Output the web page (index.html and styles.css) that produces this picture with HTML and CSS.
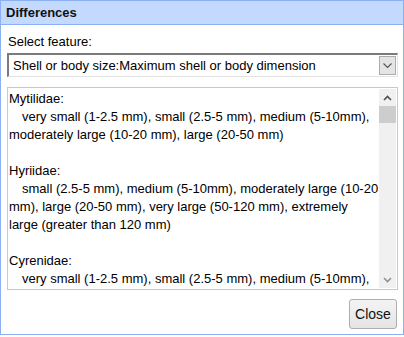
FILE: index.html
```html
<!DOCTYPE html>
<html lang="en">
<head>
    <meta charset="UTF-8">
    <title>Differences</title>
    <link rel="stylesheet" href="styles.css">
</head>
<body>
    <div class="dialog">
        <div class="dialog-title">Differences</div>
        <div class="dialog-body">
            <div class="field-label">Select feature:</div>
            <div class="select-box">
                <span class="select-text">Shell or body size:Maximum shell or body dimension</span>
                <span class="select-arrow">
                    <svg width="9" height="6" viewBox="0 0 9 6"><path d="M0.5 0.5 L4.5 4.5 L8.5 0.5" fill="none" stroke="#555" stroke-width="1.1"/></svg>
                </span>
            </div>
            <div class="result-box">
                <div class="result-text">
                    <div class="family">Mytilidae:</div>
                    <div class="values">very small (1-2.5 mm), small (2.5-5 mm), medium (5-10mm), moderately large (10-20 mm), large (20-50 mm)</div>
                    <div class="family">Hyriidae:</div>
                    <div class="values">small (2.5-5 mm), medium (5-10mm), moderately large (10-20 mm), large (20-50 mm), very large (50-120 mm), extremely large (greater than 120 mm)</div>
                    <div class="family">Cyrenidae:</div>
                    <div class="values">very small (1-2.5 mm), small (2.5-5 mm), medium (5-10mm), moderately large (10-20 mm), large (20-50 mm)</div>
                </div>
                <div class="scrollbar">
                    <span class="scroll-btn">
                        <svg width="9" height="6" viewBox="0 0 9 6"><path d="M1 5 L4.5 1.5 L8 5" fill="none" stroke="#505050" stroke-width="1.6"/></svg>
                    </span>
                    <span class="scroll-thumb"></span>
                    <span class="scroll-track"></span>
                    <span class="scroll-btn">
                        <svg width="9" height="6" viewBox="0 0 9 6"><path d="M1 1 L4.5 4.5 L8 1" fill="none" stroke="#909090" stroke-width="1.6"/></svg>
                    </span>
                </div>
            </div>
        </div>
        <div class="dialog-footer">
            <button class="close-button">Close</button>
        </div>
    </div>
</body>
</html>
```

FILE: styles.css
```css
body {
    margin: 0;
    font-family: "Liberation Sans", Arial, sans-serif;
    font-size: 13px;
    color: #000;
    background: #fff;
}

.dialog {
    width: 404px;
    height: 335px;
    box-sizing: border-box;
    border: 1px solid #8cb1f2;
    display: flex;
    flex-direction: column;
}

.dialog-title {
    height: 23px;
    line-height: 23px;
    padding-left: 5px;
    background: #c4d9fe;
    border-bottom: 1px solid #8cb1f2;
    font-weight: bold;
    color: #111;
}

.dialog-body {
    padding: 8px 5px 0 6px;
    display: flex;
    flex-direction: column;
}

.field-label {
    height: 18px;
    line-height: 18px;
    padding-left: 1px;
    margin-bottom: 2px;
}

.select-box {
    height: 24px;
    box-sizing: border-box;
    border-top: 2px solid #7b7b7b;
    border-left: 2px solid #7b7b7b;
    border-right: 1px solid #e3e3e3;
    border-bottom: 1px solid #e3e3e3;
    display: flex;
    align-items: center;
    padding-left: 4px;
    padding-right: 1px;
}

.select-text {
    flex: 1;
    white-space: nowrap;
    overflow: hidden;
}

.select-arrow {
    width: 17px;
    height: 19px;
    box-sizing: border-box;
    background: #e4e4e4;
    border: 1px solid #acacac;
    display: flex;
    align-items: center;
    justify-content: center;
}

.result-box {
    margin-top: 10px;
    height: 203px;
    box-sizing: border-box;
    border: 1px solid #c8c8c8;
    display: flex;
    overflow: hidden;
}

.result-text {
    flex: 1;
    padding: 2px 0 0 1px;
    line-height: 18px;
    overflow: hidden;
}

.family {
    margin-top: 18px;
}

.family:first-child {
    margin-top: 0;
}

.values {
    text-indent: 13px;
}

.scrollbar {
    width: 17px;
    margin: 1px 1px 1px 0;
    background: #f0f0f0;
    display: flex;
    flex-direction: column;
}

.scroll-btn {
    height: 17px;
    display: flex;
    align-items: center;
    justify-content: center;
}

.scroll-thumb {
    height: 17px;
    background: #cdcdcd;
}

.scroll-track {
    flex: 1;
}

.dialog-footer {
    flex: 1;
    display: flex;
    justify-content: flex-end;
    align-items: flex-start;
    padding: 9px 6px 0 0;
}

.close-button {
    width: 48px;
    height: 30px;
    font-family: "Liberation Sans", Arial, sans-serif;
    font-size: 14px;
    color: #111;
    background: linear-gradient(#f4f4f4, #e4e4e4);
    border: 1px solid #adadad;
    border-radius: 3px;
    padding: 0;
}
```
